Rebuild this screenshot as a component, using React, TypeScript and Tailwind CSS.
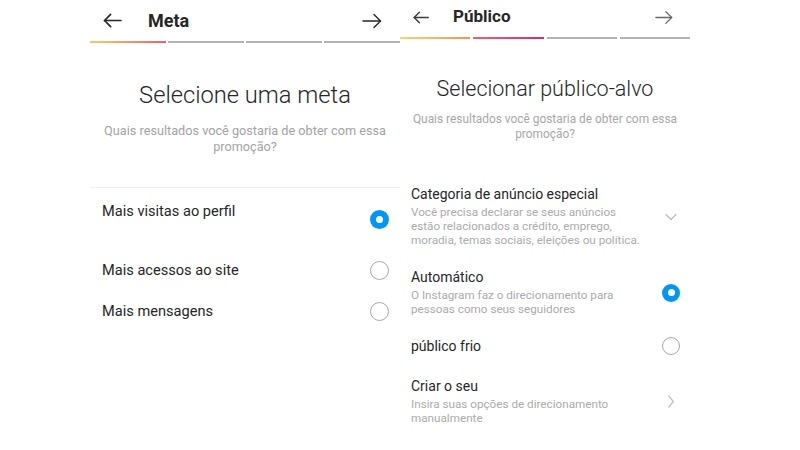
import React from 'react'

const ArrowLeft = ({ className = '' }: { className?: string }) => (
    <svg viewBox="0 0 20 16" className={className} fill="none" stroke="currentColor" strokeWidth="1.8" strokeLinecap="round" strokeLinejoin="round">
        <path d="M19 8H1.5" />
        <path d="M8 1.5L1.5 8L8 14.5" />
    </svg>
)

const ArrowRight = ({ className = '' }: { className?: string }) => (
    <svg viewBox="0 0 20 16" className={className} fill="none" stroke="currentColor" strokeWidth="1.4" strokeLinecap="round" strokeLinejoin="round">
        <path d="M1 8h17.5" />
        <path d="M12 1.5L18.5 8L12 14.5" />
    </svg>
)

const ChevronDown = () => (
    <svg viewBox="0 0 12 8" className="w-[12px] h-[8px] text-[#bdbdbd]" fill="none" stroke="currentColor" strokeWidth="1.3" strokeLinecap="round" strokeLinejoin="round">
        <path d="M1 1.5l5 5 5-5" />
    </svg>
)

const ChevronRight = () => (
    <svg viewBox="0 0 8 14" className="w-[8px] h-[13px] text-[#bdbdbd]" fill="none" stroke="currentColor" strokeWidth="1.3" strokeLinecap="round" strokeLinejoin="round">
        <path d="M1.5 1l5 6-5 6" />
    </svg>
)

const Radio = ({ checked, size }: { checked?: boolean; size: 'lg' | 'sm' }) => {
    const box = size === 'lg' ? 'w-[19px] h-[19px]' : 'w-[18px] h-[18px]'
    if (checked) {
        return (
            <div className={`${box} rounded-full bg-[#0095f6] flex items-center justify-center shrink-0`}>
                <div className="w-[7px] h-[7px] rounded-full bg-white" />
            </div>
        )
    }
    return <div className={`${box} rounded-full border border-[#a8a8a8] shrink-0`} />
}

const MetaScreen = () => (
    <div className="w-[310px] flex flex-col">
        <div className="h-[41px] flex items-center pl-[13px] pr-[18px] text-[#262626]">
            <ArrowLeft className="w-[19px] h-[15px]" />
            <h1 className="ml-[26px] text-[18px] font-bold">Meta</h1>
            <ArrowRight className="ml-auto w-[20px] h-[16px]" />
        </div>
        <div className="flex gap-[2px] h-[2px]">
            <div className="flex-1 bg-gradient-to-r from-[#fbc95f] to-[#ee5d6c]" />
            <div className="flex-1 bg-[#b4b4b4]" />
            <div className="flex-1 bg-[#b4b4b4]" />
            <div className="flex-1 bg-[#b4b4b4]" />
        </div>
        <h2 className="mt-[38px] text-center text-[23.7px] leading-[28px] font-light text-[#262626]">Selecione uma meta</h2>
        <p className="mt-[14px] text-center text-[12.7px] leading-[16px] text-[#a3a3a3]">
            Quais resultados você gostaria de obter com essa<br />promoção?
        </p>
        <div className="mt-[32px] h-px bg-[#efefef]" />
        <div className="h-[62px] flex pl-[12px] pr-[11px]">
            <p className="pt-[14px] text-[14.6px] leading-[18px] text-[#262626]">Mais visitas ao perfil</p>
            <div className="ml-auto self-center">
                <Radio checked size="lg" />
            </div>
        </div>
        <div className="h-[40px] flex items-center pl-[12px] pr-[11px]">
            <p className="text-[14.6px] leading-[18px] text-[#262626]">Mais acessos ao site</p>
            <div className="ml-auto">
                <Radio size="lg" />
            </div>
        </div>
        <div className="h-[42px] flex items-center pl-[12px] pr-[11px]">
            <p className="text-[14.6px] leading-[18px] text-[#262626]">Mais mensagens</p>
            <div className="ml-auto">
                <Radio size="lg" />
            </div>
        </div>
    </div>
)

const Option = ({ title, lines, right, className = '' }: { title: string; lines?: string[]; right: React.ReactNode; className?: string }) => (
    <div className={`flex items-center pl-[11px] pr-[10px] ${className}`}>
        <div className="flex flex-col">
            <p className="text-[14px] leading-[17px] text-[#262626]">{title}</p>
            {lines && (
                <p className="mt-[2px] text-[11.7px] leading-[14px] text-[#ababab]">
                    {lines.map((l, i) => (
                        <span key={i} className="block">{l}</span>
                    ))}
                </p>
            )}
        </div>
        <div className="ml-auto w-[18px] flex justify-center">{right}</div>
    </div>
)

const PublicoScreen = () => (
    <div className="w-[290px] flex flex-col">
        <div className="h-[37px] pb-[3px] flex items-center pl-[13px] pr-[17px] text-[#3a3a3a]">
            <ArrowLeft className="w-[16px] h-[13px]" />
            <h1 className="ml-[24px] text-[17px] font-bold text-[#262626]">Público</h1>
            <ArrowRight className="ml-auto w-[18px] h-[15px] text-[#666]" />
        </div>
        <div className="flex gap-[3px] h-[2px]">
            <div className="flex-1 bg-gradient-to-r from-[#fcd36a] to-[#f5925a]" />
            <div className="flex-1 bg-gradient-to-r from-[#ef5f7a] to-[#d8286e]" />
            <div className="flex-1 bg-[#b4b4b4]" />
            <div className="flex-1 bg-[#b4b4b4]" />
        </div>
        <h2 className="mt-[37px] text-center text-[21.5px] leading-[25px] font-light text-[#262626]">Selecionar público-alvo</h2>
        <p className="mt-[11px] text-center text-[11.9px] leading-[15px] text-[#a8a8a8]">
            Quais resultados você gostaria de obter com essa<br />promoção?
        </p>
        <Option
            className="mt-[44px]"
            title="Categoria de anúncio especial"
            lines={['Você precisa declarar se seus anúncios', 'estão relacionados a crédito, emprego,', 'moradia, temas sociais, eleições ou política.']}
            right={<ChevronDown />}
        />
        <Option
            className="mt-[22px]"
            title="Automático"
            lines={['O Instagram faz o direcionamento para', 'pessoas como seus seguidores']}
            right={<Radio checked size="sm" />}
        />
        <Option className="mt-[21px]" title="público frio" right={<Radio size="sm" />} />
        <Option
            className="mt-[23px]"
            title="Criar o seu"
            lines={['Insira suas opções de direcionamento', 'manualmente']}
            right={<ChevronRight />}
        />
    </div>
)

export default function App() {
    return (
        <div className="w-[800px] h-[450px] bg-white flex pl-[90px] overflow-hidden font-['Roboto',sans-serif]">
            <MetaScreen />
            <PublicoScreen />
        </div>
    )
}
